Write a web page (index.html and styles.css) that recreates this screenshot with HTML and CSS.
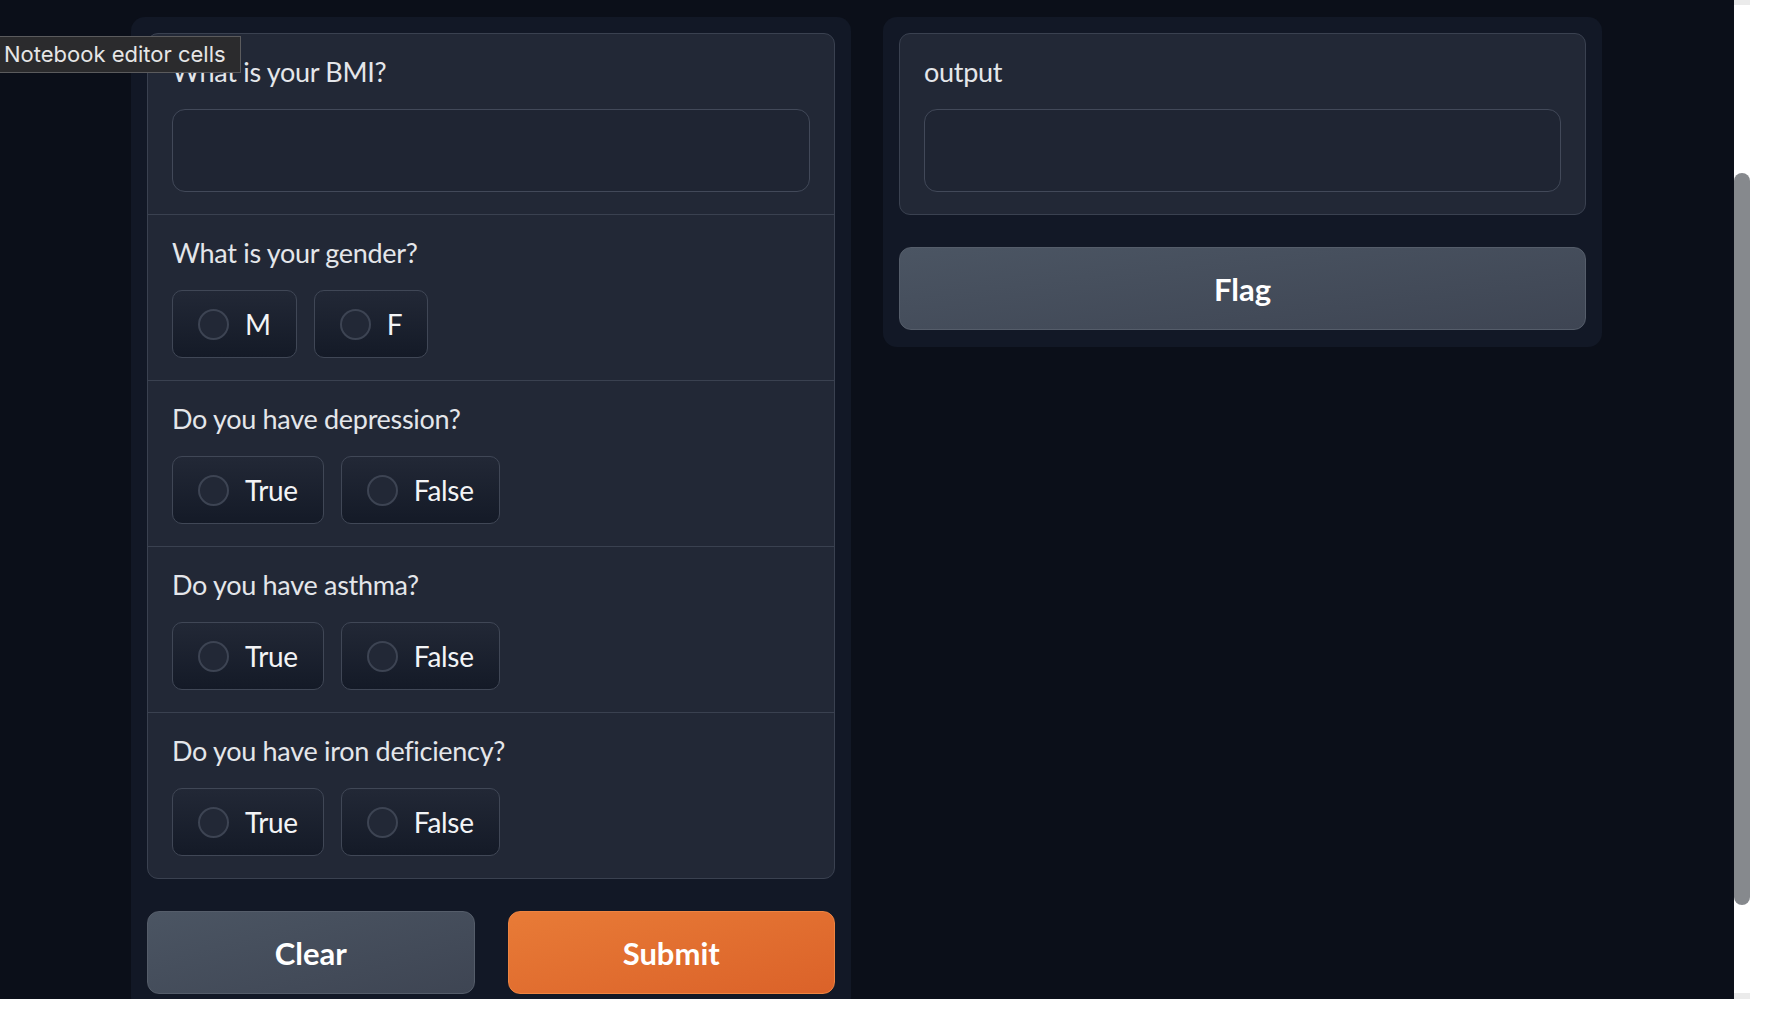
FILE: index.html
```html
<!DOCTYPE html>
<html lang="en">
<head>
<meta charset="utf-8">
<title>Gradio form</title>
<link rel="stylesheet" href="styles.css">
</head>
<body>
<div class="screen">
  <div class="app">
    <div class="tooltip">Notebook editor cells</div>
    <div class="row">
      <div class="panel panel-left">
        <div class="form">
          <div class="field">
            <div class="lbl">What is your BMI?</div>
            <div class="textbox"></div>
          </div>
          <div class="field">
            <div class="lbl">What is your gender?</div>
            <div class="options">
              <div class="opt"><span class="dot"></span><span class="opt-text">M</span></div>
              <div class="opt"><span class="dot"></span><span class="opt-text">F</span></div>
            </div>
          </div>
          <div class="field">
            <div class="lbl">Do you have depression?</div>
            <div class="options">
              <div class="opt"><span class="dot"></span><span class="opt-text">True</span></div>
              <div class="opt"><span class="dot"></span><span class="opt-text">False</span></div>
            </div>
          </div>
          <div class="field">
            <div class="lbl">Do you have asthma?</div>
            <div class="options">
              <div class="opt"><span class="dot"></span><span class="opt-text">True</span></div>
              <div class="opt"><span class="dot"></span><span class="opt-text">False</span></div>
            </div>
          </div>
          <div class="field">
            <div class="lbl">Do you have iron deficiency?</div>
            <div class="options">
              <div class="opt"><span class="dot"></span><span class="opt-text">True</span></div>
              <div class="opt"><span class="dot"></span><span class="opt-text">False</span></div>
            </div>
          </div>
        </div>
        <div class="actions">
          <button class="btn btn-secondary">Clear</button>
          <button class="btn btn-primary">Submit</button>
        </div>
      </div>
      <div class="panel panel-right">
        <div class="form">
          <div class="field">
            <div class="lbl">output</div>
            <div class="textbox"></div>
          </div>
        </div>
        <button class="btn btn-secondary">Flag</button>
      </div>
    </div>
  </div>
  <div class="track">
    <div class="track-cap"></div>
    <div class="thumb"></div>
    <div class="track-fill"></div>
    <div class="track-cap track-cap-bottom"></div>
  </div>
</div>
</body>
</html>
```

FILE: styles.css
```css
* { box-sizing: border-box; }

html, body {
  margin: 0;
  padding: 0;
  background: #ffffff;
}

body {
  font-family: "Lato", "Noto Sans", sans-serif;
  color: #e5e7eb;
}

.screen {
  display: flex;
  height: 999px;
  width: 1750px;
}

.app {
  position: relative;
  width: 1734px;
  height: 999px;
  background: #0b0f19;
  overflow: hidden;
  padding: 17px 0 0 131px;
}

.row {
  display: flex;
  gap: 32px;
  align-items: flex-start;
}

.panel {
  background: #121826;
  border-radius: 14px;
  padding: 16px 16px 17px;
  display: flex;
  flex-direction: column;
  gap: 32px;
}

.panel-left { width: 720px; }
.panel-right { width: 719px; }

.form {
  border: 1px solid #3a4150;
  border-radius: 11px;
  background: #222836;
  overflow: hidden;
}

.field {
  padding: 21px 24px 22px;
}

.field + .field {
  border-top: 1px solid #3a4150;
}

.lbl {
  font-size: 27px;
  letter-spacing: -0.3px;
  line-height: 34px;
  height: 34px;
  margin-bottom: 20px;
  color: #e4e6ea;
  white-space: nowrap;
}

.textbox {
  height: 83px;
  border: 1px solid #424959;
  border-radius: 13px;
  background: #1f2533;
}

.options {
  display: flex;
  gap: 17px;
}

.opt {
  display: flex;
  align-items: center;
  gap: 16px;
  height: 68px;
  padding: 0 25px;
  border: 1px solid #404756;
  border-radius: 10px;
  background: linear-gradient(to bottom, #222836, #141a27);
}

.dot {
  width: 31px;
  height: 31px;
  border-radius: 50%;
  border: 2px solid #3d4453;
  background: #222836;
  flex: none;
}

.opt-text {
  font-size: 28px;
  letter-spacing: -0.3px;
  line-height: 34px;
  color: #f3f4f6;
}

.actions {
  display: flex;
  gap: 33px;
}

.actions .btn { flex: 1; }

.btn {
  height: 83px;
  border-radius: 12px;
  font-family: "Lato", "Noto Sans", sans-serif;
  font-weight: 700;
  font-size: 31px;
  color: #ffffff;
  padding: 0;
  cursor: pointer;
}

.btn-secondary {
  border: 1px solid #555d6a;
  background: linear-gradient(to bottom right, #4b5563, #3e4553);
}

.btn-primary {
  border: 1px solid #ee8441;
  background: linear-gradient(to bottom right, #e87b37, #db6229);
}

.tooltip {
  position: absolute;
  left: 0;
  top: 36px;
  height: 37px;
  padding: 0 14px 0 4px;
  background: #2b2b2d;
  border: 1px solid #5b5b5d;
  border-left: none;
  font-family: "Inter", sans-serif;
  font-size: 22px;
  line-height: 35px;
  color: #e6e6e6;
  z-index: 2;
  white-space: nowrap;
}

.track {
  width: 16px;
  height: 999px;
  display: flex;
  flex-direction: column;
  background: #ffffff;
}

.track-cap {
  height: 5px;
  background: #ebebeb;
}

.thumb {
  margin-top: 168px;
  height: 732px;
  background: #86898d;
  border-radius: 8px;
}

.track-fill { flex: 1; }

.track-cap-bottom { height: 6px; }
```
